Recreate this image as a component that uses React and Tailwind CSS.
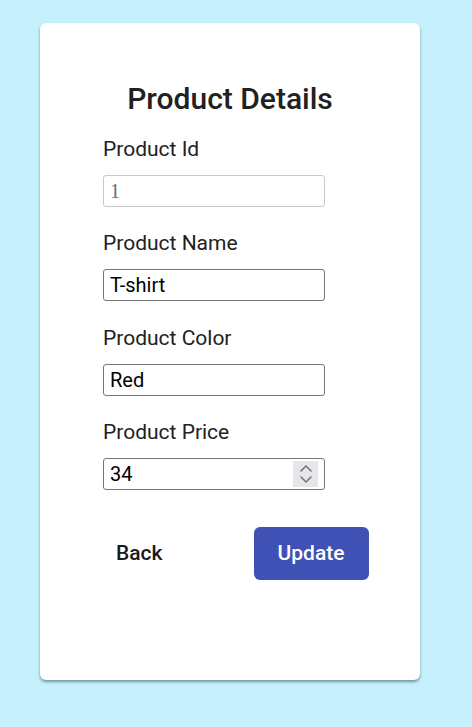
import React from 'react';

const fields = [
  { label: 'Product Id', value: '1', disabled: true },
  { label: 'Product Name', value: 'T-shirt' },
  { label: 'Product Color', value: 'Red' },
  { label: 'Product Price', value: '34', number: true },
];

function Spinner() {
  return (
    <div className="absolute right-[7px] top-[3px] flex h-[26px] w-[25px] items-center justify-center bg-[#e6e6ea]">
      <svg width="14" height="22" viewBox="0 0 14 22" fill="none" stroke="#767676" strokeWidth="1.6" strokeLinecap="round" strokeLinejoin="round">
        <path d="M2 8 L7 3 L12 8" />
        <path d="M2 14 L7 19 L12 14" />
      </svg>
    </div>
  );
}

export default function App() {
  return (
    <div className="min-h-screen bg-[#c6f0fc] pt-[23px]" style={{ fontFamily: 'Roboto, "Liberation Sans", sans-serif' }}>
      <div className="ml-[40px] h-[657px] w-[380px] rounded-md bg-white shadow-[0_2px_3px_rgba(40,80,90,0.55)]">
        <h1 className="pt-[58px] text-center text-[30px] font-medium leading-[36px] text-[#212121]">Product Details</h1>
        <div className="ml-[63px] w-[222px]">
          {fields.map((f, i) => (
            <div key={f.label} className={i === 0 ? 'mt-[15px]' : i === 2 ? 'mt-[20px]' : 'mt-[19px]'}>
              <div className="text-[21px] leading-[34px] text-[#212121]">{f.label}</div>
              <div className="relative mt-[9px]">
                <input
                  readOnly
                  disabled={f.disabled}
                  value={f.value}
                  className={`block h-[32px] w-[222px] rounded-[3px] border px-[6px] text-[20px] outline-none ${f.disabled ? 'border-[#c9c9c9] bg-white text-[#6d6d6d]' : 'border-[#767676] text-black'}`}
                  style={{ fontFamily: f.disabled ? '"Liberation Serif", serif' : 'Roboto, sans-serif' }}
                />
                {f.number && <Spinner />}
              </div>
            </div>
          ))}
        </div>
        <div className="mt-[37px] flex items-center pl-[76px]">
          <button className="text-[21px] font-medium text-[#1a1a1a]">Back</button>
          <button className="ml-[91px] h-[53px] w-[115px] rounded-md bg-[#3f51b5] text-[21px] font-medium text-white">Update</button>
        </div>
      </div>
    </div>
  );
}
